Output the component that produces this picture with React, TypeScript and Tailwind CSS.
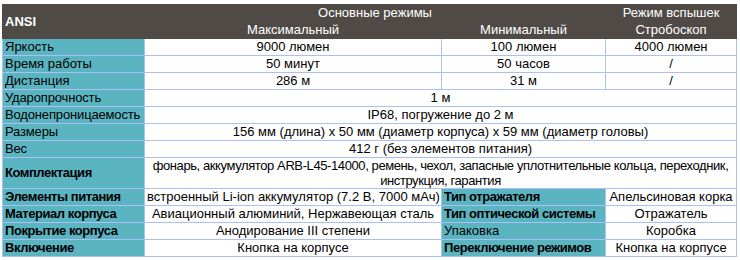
const label = "bg-[#5ab5c1] border border-[#a9c1f4] px-[2px] text-left text-black whitespace-nowrap overflow-hidden";
const val = "bg-white border border-[#a9c1f4] px-[2px] text-center text-black";
const headBase = "bg-[#4f4a46] border border-[#4f4a46] text-white px-[2px]";
const head = headBase + " text-center font-normal";
const bold = " font-bold tracking-[-0.45px]";

type Pair = { k: string; v: string; k2: string; v2: string; bold2?: boolean };

const modeRows = [
  ["Яркость", "9000 люмен", "100 люмен", "4000 люмен"],
  ["Время работы", "50 минут", "50 часов", "/"],
  ["Дистанция", "286 м", "31 м", "/"],
];

const spanRows = [
  ["Ударопрочность", "1 м"],
  ["Водонепроницаемость", "IP68, погружение до 2 м"],
  ["Размеры", "156 мм (длина) x 50 мм (диаметр корпуса) x 59 мм (диаметр головы)"],
  ["Вес", "412 г (без элементов питания)"],
];

const pairRows: Pair[] = [
  { k: "Элементы питания", v: "встроенный Li-ion аккумулятор (7.2 В, 7000 мАч)", k2: "Тип отражателя", v2: "Апельсиновая корка", bold2: true },
  { k: "Материал корпуса", v: "Авиационный алюминий, Нержавеющая сталь", k2: "Тип оптической системы", v2: "Отражатель", bold2: true },
  { k: "Покрытие корпуса", v: "Анодирование III степени", k2: "Упаковка", v2: "Коробка" },
  { k: "Включение", v: "Кнопка на корпусе", k2: "Переключение режимов", v2: "Кнопка на корпусе", bold2: true },
];

export default function App() {
  return (
    <div className="bg-white w-[740px] h-[260px] pt-[4px] pl-[2px]" style={{ fontFamily: '"Liberation Sans", Arial, sans-serif' }}>
      <table className="border-collapse text-[13px] leading-[16px] table-fixed w-[734px]">
        <colgroup>
          <col className="w-[142px]" />
          <col className="w-[297px]" />
          <col className="w-[164px]" />
          <col className="w-[131px]" />
        </colgroup>
        <thead>
          <tr className="h-[17px]">
            <th rowSpan={2} className={headBase + " text-left font-bold"}>ANSI</th>
            <th colSpan={2} className={head}>Основные режимы</th>
            <th className={head}>Режим вспышек</th>
          </tr>
          <tr className="h-[17px]">
            <th className={head}>Максимальный</th>
            <th className={head}>Минимальный</th>
            <th className={head}>Стробоскоп</th>
          </tr>
        </thead>
        <tbody>
          {modeRows.map((r) => (
            <tr key={r[0]} className="h-[17px]">
              <td className={label}>{r[0]}</td>
              <td className={val}>{r[1]}</td>
              <td className={val}>{r[2]}</td>
              <td className={val}>{r[3]}</td>
            </tr>
          ))}
          {spanRows.map((r) => (
            <tr key={r[0]} className="h-[17px]">
              <td className={label + " tracking-[-0.15px]"}>{r[0]}</td>
              <td colSpan={3} className={val}>{r[1]}</td>
            </tr>
          ))}
          <tr className="h-[31px]">
            <td className={label + bold}>Комплектация</td>
            <td colSpan={3} className={val + " leading-[15px] whitespace-nowrap tracking-[-0.4px]"}>
              фонарь, аккумулятор ARB-L45-14000, ремень, чехол, запасные уплотнительные кольца, переходник,
              <br />
              инструкция, гарантия
            </td>
          </tr>
          {pairRows.map((r) => (
            <tr key={r.k} className="h-[17px]">
              <td className={label + bold}>{r.k}</td>
              <td className={val + " whitespace-nowrap"}>{r.v}</td>
              <td className={label + (r.bold2 ? bold : "")}>{r.k2}</td>
              <td className={val + " whitespace-nowrap"}>{r.v2}</td>
            </tr>
          ))}
        </tbody>
      </table>
    </div>
  );
}
